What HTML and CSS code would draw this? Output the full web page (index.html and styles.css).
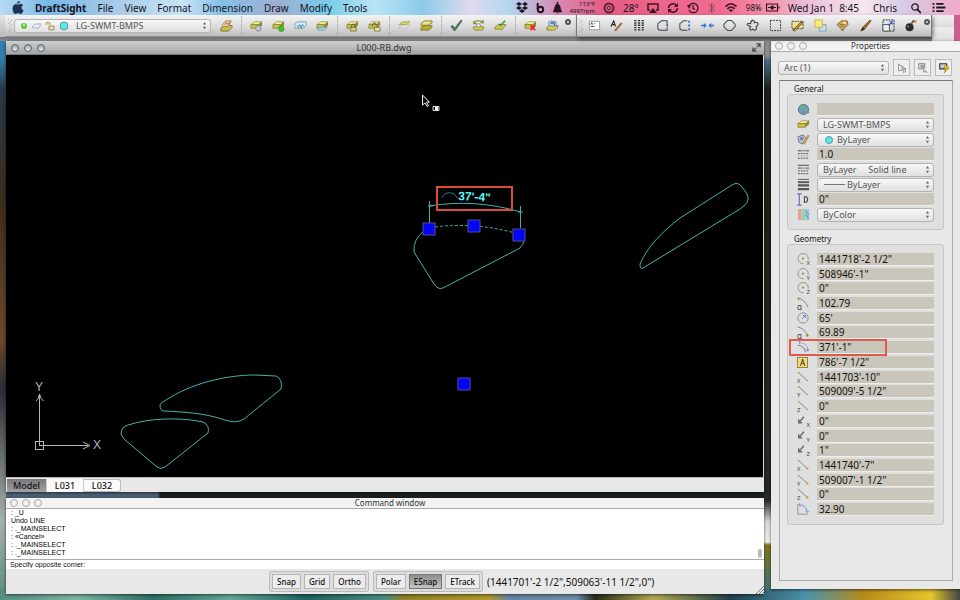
FILE: index.html
```html
<!DOCTYPE html>
<html lang="en">
<head>
<meta charset="utf-8">
<title>DraftSight - L000-RB.dwg</title>
<link rel="stylesheet" href="styles.css">
</head>
<body>
<svg class="sprite" aria-hidden="true">
  <symbol id="slab" viewBox="0 0 14 14"><path d="M1 6l4-3h8l-4 3z" fill="#f3efa0" stroke="#8b8326" stroke-width=".7"/><path d="M1 6h8v4H1z" fill="#c9c04a" stroke="#7b7426" stroke-width=".7"/><path d="M9 6l4-3v4l-4 3z" fill="#8f8834"/></symbol>
  <symbol id="slab2" viewBox="0 0 14 14"><path d="M1 9l4-2h8v2l-4 3H1z" fill="#b3ab38" stroke="#6f6924" stroke-width=".7"/><path d="M1 5l4-3h8v2L9 7H1z" fill="#d3ca52" stroke="#6f6924" stroke-width=".7"/><path d="M2 5l3.500-2H12L9 5z" fill="#f1eda0"/></symbol>
  <symbol id="manager" viewBox="0 0 14 14"><path d="M1 10l4-3h8v2l-4 4H1z" fill="#c9c04a" stroke="#665d20" stroke-width=".8"/><path d="M2 7l4-5h6L9 8H3z" fill="#ecd9b4" stroke="#9b6e40" stroke-width=".8"/><path d="M5 6l2-2 1 2 3-3" stroke="#b4472b" fill="none"/></symbol>
  <symbol id="badge-grey" viewBox="0 0 14 14"><use href="#slab"/><circle cx="9" cy="10" r="3" fill="#c9c9c9" stroke="#777" stroke-width=".8"/></symbol>
  <symbol id="badge-green" viewBox="0 0 14 14"><use href="#slab"/><circle cx="10" cy="10.500" r="3" fill="#38c923" stroke="#248516" stroke-width=".6"/></symbol>
  <symbol id="badge-frozen" viewBox="0 0 14 14"><path d="M1 5l3-2h9v4l-3 3H1z" fill="#d4ebf4" stroke="#668fa3" stroke-width=".8"/><path d="M3 7l2 2 1-3 2 4 1-4 2 2" stroke="#356f9a" fill="none" stroke-width=".9"/></symbol>
  <symbol id="badge-thaw" viewBox="0 0 14 14"><use href="#slab"/><path d="M3 9h9l-3 3H2z" fill="#a9d5ee" stroke="#5588a7" stroke-width=".7"/></symbol>
  <symbol id="badge-lock" viewBox="0 0 14 14"><use href="#slab"/><path d="M6 9V7.500a2 2 0 0 1 4 0V9" fill="none" stroke="#555"/><path d="M5 9h6v4H5z" fill="#d6cf77" stroke="#5d5727" stroke-width=".7"/></symbol>
  <symbol id="badge-unlock" viewBox="0 0 14 14"><use href="#slab"/><path d="M5 8V6.500a2 2 0 0 1 4 0" fill="none" stroke="#555"/><path d="M7 9h6v4H7z" fill="#eee4a2" stroke="#5d5727" stroke-width=".7"/></symbol>
  <symbol id="slab-fade" viewBox="0 0 14 14"><path d="M1 9l4-3h8l-4 4H1z" fill="#e0e0dc" stroke="#b4b4ac" stroke-width=".6"/><path d="M1 6l4-3h8L9 6z" fill="#ddd562" stroke="#99923a" stroke-width=".7"/></symbol>
  <symbol id="check" viewBox="0 0 14 14"><path d="M1 8l2-1 2 3 7-9 1 1-8 11z" fill="#3e8f5b" stroke="#1e4931" stroke-width=".7"/></symbol>
  <symbol id="cycle" viewBox="0 0 14 14"><path d="M1 9l3-1h7l2 1-2 3H3z" fill="#d3ca52" stroke="#6f6924" stroke-width=".7"/><path d="M2 5c1-4 8-4 10-1M12 1v3H9M2 2v3h3" fill="none" stroke="#8b8326" stroke-width="1.200"/><circle cx="7" cy="7" r="2" fill="#f1f1cd" stroke="#4986a0" stroke-width=".8"/></symbol>
  <symbol id="slab-check" viewBox="0 0 14 14"><path d="M1 9l4-3h8l-4 5H1z" fill="#d3ca52" stroke="#6f6924" stroke-width=".7"/><path d="M5 5l2 2 5-5" fill="none" stroke="#309b28" stroke-width="1.500"/></symbol>
  <symbol id="slab-x" viewBox="0 0 14 14"><use href="#slab"/><path d="M7 7l5 5M12 7l-5 5" stroke="#e52b1d" stroke-width="2"/></symbol>
  <symbol id="slab-back" viewBox="0 0 14 14"><path d="M1 9l3-2h9v2l-4 3H1z" fill="#d3ca52" stroke="#6f6924" stroke-width=".7"/><path d="M3 7V3l3-1 5 1v5z" fill="#c5d9ee" stroke="#4f7193" stroke-width=".7"/><path d="M5 5c2-2 5-1 4 2" fill="none" stroke="#1454ae" stroke-width="1.300"/></symbol>

  <symbol id="note" viewBox="0 0 14 14"><path d="M1.500 2.500h11v9h-11z" fill="#fff" stroke="#999"/><path d="M3 6l1-2 1 2M7 5h1M3 8h4" stroke="#333" fill="none"/></symbol>
  <symbol id="text-edit" viewBox="0 0 14 14"><path d="M1 8l3-6 2 6M2 6h3" fill="none" stroke="#222" stroke-width="1.200"/><path d="M5 12l7-8 1 1-7 8z" fill="#b97b3a" stroke="#664018" stroke-width=".6"/></symbol>
  <symbol id="pattern" viewBox="0 0 14 14"><path d="M2.500 1v12M6.500 1v12M10.500 1v12" stroke="#333" stroke-width="2.400" stroke-dasharray="1.500 1"/></symbol>
  <symbol id="poly-open" viewBox="0 0 14 14"><path d="M12 5V2H6L2 5v5q0 2 3 2h7V9" fill="none" stroke="#444" stroke-width="1.100"/><path d="M11 5h2v3h-2z" fill="#376bd4"/></symbol>
  <symbol id="poly-dots" viewBox="0 0 14 14"><path d="M10 2H6L2 5v5q0 2 3 2h5" fill="none" stroke="#444" stroke-width="1.100"/><path d="M11 2h2v2h-2zM11 6h2v2h-2zM11 10h2v2h-2z" fill="#376bd4"/></symbol>
  <symbol id="join" viewBox="0 0 14 14"><path d="M0 7h5M14 7H9" stroke="#267ce1" stroke-width="1.500"/><path d="M3 4l3 3-3 3zM11 4L8 7l3 3z" fill="#267ce1"/></symbol>
  <symbol id="polygon" viewBox="0 0 14 14"><path d="M5 1.500h4l4 4v3l-4 4H5l-4-4v-3z" fill="none" stroke="#444" stroke-width="1.100"/></symbol>
  <symbol id="cloud" viewBox="0 0 14 14"><path d="M5 5c0-5 5-4 4-1 5-1 5 2 2 4 1 4-2 5-4 3-2 2-4 0-2-3-5-1-5-4 0-3z" fill="none" stroke="#444" stroke-width="1.200"/></symbol>
  <symbol id="marquee" viewBox="0 0 14 14"><path d="M1.500 1.500h11v11h-11z" fill="none" stroke="#333" stroke-dasharray="2 1"/></symbol>
  <symbol id="hatch-edit" viewBox="0 0 14 14"><path d="M1 2.500h12v8H1z" fill="#eee28b" stroke="#333" stroke-dasharray="2 1"/><path d="M2 12l9-9 2 1-9 9z" fill="#be953d" stroke="#423216" stroke-width=".7"/></symbol>
  <symbol id="order" viewBox="0 0 14 14"><path d="M6 6h7v7H6z" fill="#c1dfed" stroke="#7195a5" stroke-width=".8"/><path d="M1 1h8v8H1z" fill="#f7ea78" stroke="#b8ab4b" stroke-width=".8"/></symbol>
  <symbol id="palette" viewBox="0 0 14 14"><path d="M1 6l5-4h6l1 4-4 4-2 3-2-3z" fill="#d9a84c" stroke="#704b24" stroke-width=".8"/><path d="M4 6h6M5 8h4" stroke="#5f7884"/><circle cx="9" cy="4" r="1.700" fill="#efdc92"/></symbol>
  <symbol id="brush" viewBox="0 0 14 14"><path d="M2 13l2-4 8-8 1 1-7 9z" fill="#a96928" stroke="#51300f" stroke-width=".7"/><path d="M2 13l2-4 2 2z" fill="#252525"/></symbol>
  <symbol id="scale" viewBox="0 0 14 14"><path d="M1 1h12v12H1z" fill="none" stroke="#222" stroke-dasharray="2 1"/><path d="M1 6h7v7H1z" fill="#eee" stroke="#555"/><path d="M7 7l4-4M8 3h3v3" fill="none" stroke="#3156dd" stroke-width="1.200"/></symbol>
  <symbol id="bomb" viewBox="0 0 14 14"><circle cx="6" cy="9" r="4.300" fill="#292929"/><path d="M8 5l2-3 2 1" fill="none" stroke="#333" stroke-width="1.500"/><circle cx="12" cy="2.500" r="1.500" fill="#ed812d"/><circle cx="4.500" cy="8" r="1" fill="#999"/></symbol>

  <symbol id="center" viewBox="0 0 14 14"><path d="M8 12.500A6 6 0 1 1 13 8" fill="none" stroke="#888"/><circle cx="7" cy="6.500" r="1.300" fill="#9a8d31"/></symbol>
  <symbol id="arc-start" viewBox="0 0 14 14"><path d="M1 1q8 2 12 11" fill="none" stroke="#777"/><circle cx="2" cy="2" r="1.200" fill="#918534"/></symbol>
  <symbol id="arc-end" viewBox="0 0 14 14"><path d="M1 1q8 2 12 11" fill="none" stroke="#777"/><circle cx="12" cy="11" r="1.400" fill="#918534"/></symbol>
  <symbol id="radius" viewBox="0 0 14 14"><circle cx="7" cy="7" r="6" fill="none" stroke="#888"/><path d="M6 8l4-4M7 4h3v3" fill="none" stroke="#5175dd"/></symbol>
  <symbol id="arc-length" viewBox="0 0 14 14"><path d="M1 5q7 0 9 8" fill="none" stroke="#667"/><path d="M2 2q10 0 11 9M3 0v4M11 11h3M12 9v4" fill="none" stroke="#6688e3" stroke-dasharray="3 1"/></symbol>
  <symbol id="line-start" viewBox="0 0 14 14"><path d="M2 2l11 10" stroke="#777"/><circle cx="2" cy="2" r="1.200" fill="#c7b85a"/></symbol>
  <symbol id="line-end" viewBox="0 0 14 14"><path d="M1 1l11 10" stroke="#777"/><circle cx="12" cy="11" r="1.400" fill="#c7ab45"/></symbol>
  <symbol id="normal" viewBox="0 0 14 14"><path d="M8 2L3 8M2 5v4h4" fill="none" stroke="#666" stroke-width="1.600"/></symbol>
  <symbol id="angle" viewBox="0 0 14 14"><path d="M1 1v12h12" fill="none" stroke="#888"/><path d="M2 2q9 0 10 9M4 0L2 2l2 2M10 9l2 2 2-2" fill="none" stroke="#6688e3"/></symbol>
  <symbol id="steppers" viewBox="0 0 6 10"><path d="M3 0l2 3H1zM3 9l2-3H1z" fill="#666"/></symbol>
</svg>

<nav class="menubar" aria-label="Application menu">
  <button class="apple" aria-label="Apple menu"><svg viewBox="0 0 12 14"><path d="M8 0c0 2-1 3-3 3 0-2 1-3 3-3zM6 4c1 0 2-1 3-1s2 1 2.500 1.500C9 6 9.500 9 12 10c-.5 2-2 4-3 4S7 13 6 13s-2 1-3 1C1 14-.5 9 .5 6 1.500 3 4 3.500 6 4z" fill="#1d3550"/></svg></button>
  <button class="app-name">DraftSight</button><button>File</button><button>View</button><button>Format</button><button>Dimension</button><button>Draw</button><button>Modify</button><button>Tools</button>
  <div class="status">
    <svg class="s12" viewBox="0 0 12 12"><path d="M3 0l3 2-3 2-3-2zM9 0l3 2-3 2-3-2zM3 4l3 2-3 2-3-2zM9 4l3 2-3 2-3-2zM6 7l3 2-3 2-3-2z" fill="#1c1428"/></svg>
    <svg class="s8" viewBox="0 0 8 12"><path d="M1.200 1v6" stroke="#2b1020" stroke-width="2"/><circle cx="4" cy="7.500" r="2.700" fill="none" stroke="#2b1020" stroke-width="2"/></svg>
    <svg class="s8" viewBox="0 0 9 12"><path d="M0 10c2-2 1-7 4-8V0h1v2c3 1 2 6 4 8zM3 11h3" fill="#2b1020" stroke="#2b1020" stroke-width=".5"/></svg>
    <span class="fan">113°F<br>4997rpm</span>
    <svg class="s12" viewBox="0 0 12 12"><circle cx="6" cy="6" r="4.500" fill="none" stroke="#5c2236" stroke-width="2"/><circle cx="6" cy="6" r="1.800" fill="none" stroke="#5c2236"/></svg>
    <span>28°</span>
    <svg class="s12" viewBox="0 0 12 12"><path d="M3 8H1V2h10v6H9" fill="none" stroke="#411525" stroke-width="1.500"/><path d="M6 6l4 5H2z" fill="#411525"/></svg>
    <svg class="s12" viewBox="0 0 12 12"><path d="M1.500 6a4.500 4.500 0 0 1 8-2.500M10.500 6a4.500 4.500 0 0 1-8 2.500" fill="none" stroke="#411525" stroke-width="1.500"/><path d="M11 1v4H7zM1 11V7h4z" fill="#411525"/></svg>
    <svg class="s12" viewBox="0 0 12 12"><path d="M2 4a4.700 4.700 0 1 1 0 4M6 3v3.500l2 1" fill="none" stroke="#411525" stroke-width="1.300"/><path d="M0 3l4 0-2 4z" fill="#411525"/></svg>
    <svg class="s8" viewBox="0 0 8 12"><path d="M1 3l6 5-3 3V1l3 3-6 5" fill="none" stroke="#8d4760"/></svg>
    <svg class="s14" viewBox="0 0 14 12"><path d="M1 5q6-6 12 0M3 7.500q4-4 8 0" fill="none" stroke="#411525" stroke-width="1.700"/><path d="M7 11L4.500 9q2.500-2 5 0z" fill="#411525"/></svg>
    <span class="battery">98%<svg class="s14" viewBox="0 0 14 10"><path d="M.5 1.500h11v7H.5zM13 4v2" fill="none" stroke="#35101d" stroke-width="1.200"/><path d="M2 5h2l3-2v4L4 5M7 5h3" fill="#35101d" stroke="#35101d"/></svg></span>
    <span class="clock">Wed Jan 1&nbsp; 8:45</span>
    <span class="user">Chris</span>
    <svg class="s10" viewBox="0 0 10 12"><circle cx="4" cy="5" r="3.200" fill="none" stroke="#231c2b" stroke-width="1.300"/><path d="M6.500 7.500L10 11" stroke="#231c2b" stroke-width="1.800"/></svg>
    <svg class="s14 list" viewBox="0 0 14 12"><path d="M0 2h2M0 6h2M0 10h2M4 2h8M4 6h10M4 10h8" stroke="#17151d" stroke-width="2"/></svg>
  </div>
</nav>

<div class="toolbars">
  <div class="toolbar layers" role="toolbar" aria-label="Layers">
    <i class="grip"></i>
    <div class="pick layer-pick">
      <svg class="layer-marks" viewBox="0 0 52 12"><circle cx="5" cy="6" r="3" fill="#65c044"/><circle cx="5" cy="5" r="1.200" fill="#b7ef9a"/><path d="M13 7l3-3h6l-2 4h-6z" fill="#e4edf7" stroke="#93a8c0" stroke-width=".8"/><path d="M27 5V3q2-2 4 0v2M30 6h5v4h-5z" fill="#eee0a4" stroke="#8a8055" stroke-width=".8"/><circle cx="45" cy="6" r="4" fill="#62e4e4" stroke="#428f93" stroke-width=".8"/></svg>
      <select aria-label="Active layer"><option>LG-SWMT-BMPS</option></select><svg class="step"><use href="#steppers"/></svg>
    </div>
    <button class="tool" aria-label="Layers manager"><svg><use href="#manager"/></svg></button><i class="sep"></i>
    <button class="tool" aria-label="Hide layer"><svg><use href="#badge-grey"/></svg></button>
    <button class="tool" aria-label="Show layer"><svg><use href="#badge-green"/></svg></button>
    <button class="tool" aria-label="Freeze layer"><svg><use href="#badge-frozen"/></svg></button>
    <button class="tool" aria-label="Thaw layer"><svg><use href="#badge-thaw"/></svg></button><i class="sep"></i>
    <button class="tool" aria-label="Lock layer"><svg><use href="#badge-lock"/></svg></button>
    <button class="tool" aria-label="Unlock layer"><svg><use href="#badge-unlock"/></svg></button><i class="sep"></i>
    <button class="tool" aria-label="Isolate layer"><svg><use href="#slab-fade"/></svg></button>
    <button class="tool" aria-label="Show all layers"><svg><use href="#slab2"/></svg></button><i class="sep"></i>
    <button class="tool" aria-label="Activate layer"><svg><use href="#check"/></svg></button>
    <button class="tool" aria-label="Change entity layer"><svg><use href="#cycle"/></svg></button>
    <button class="tool" aria-label="To active layer"><svg><use href="#slab-check"/></svg></button><i class="sep"></i>
    <button class="tool" aria-label="Delete layer"><svg><use href="#slab-x"/></svg></button>
    <button class="tool" aria-label="Restore layer state"><svg><use href="#slab-back"/></svg></button>
    <button class="shut" aria-label="Close layers toolbar"></button>
  </div>
  <div class="toolbar modify" role="toolbar" aria-label="Modify">
    <i class="grip"></i>
    <button class="tool" aria-label="Edit annotation"><svg><use href="#note"/></svg></button>
    <button class="tool" aria-label="Edit text"><svg><use href="#text-edit"/></svg></button>
    <button class="tool" aria-label="Pattern"><svg><use href="#pattern"/></svg></button>
    <button class="tool" aria-label="Split at point"><svg><use href="#poly-open"/></svg></button>
    <button class="tool" aria-label="Split"><svg><use href="#poly-dots"/></svg></button>
    <button class="tool" aria-label="Weld"><svg><use href="#join"/></svg></button>
    <button class="tool" aria-label="Edit polyline"><svg><use href="#polygon"/></svg></button>
    <button class="tool" aria-label="Edit spline"><svg><use href="#cloud"/></svg></button>
    <button class="tool" aria-label="Boundary"><svg><use href="#marquee"/></svg></button>
    <button class="tool" aria-label="Edit hatch"><svg><use href="#hatch-edit"/></svg></button>
    <button class="tool" aria-label="Display order"><svg><use href="#order"/></svg></button>
    <button class="tool" aria-label="Properties"><svg><use href="#palette"/></svg></button>
    <button class="tool" aria-label="Property painter"><svg><use href="#brush"/></svg></button>
    <button class="tool" aria-label="Scale"><svg><use href="#scale"/></svg></button>
    <button class="tool" aria-label="Explode"><svg><use href="#bomb"/></svg></button>
    <button class="shut" aria-label="Close modify toolbar"></button>
  </div>
  <div class="behind"></div>
</div>

<main class="workspace">
  <div class="left">
    <section class="window document">
      <header class="titlebar dark"><span class="lights"><button aria-label="Close"></button><button aria-label="Minimize"></button><button aria-label="Zoom"></button></span><h1>L000-RB.dwg</h1><svg class="expand" viewBox="0 0 10 10"><path d="M5 1h4v4M9 1L5.500 4.500M1 5v4h4M1 9l3.500-3.500" fill="none" stroke="#444" stroke-width="1.300"/></svg></header>
      <div class="canvas">
        <svg viewBox="6 55 757 422" preserveAspectRatio="xMinYMin slice">
          <g class="outline">
            <path d="M643 268Q640 270 640 264C648 246 661 233 680 218L732 185Q738 181 742 187L747 194Q750 200 745 205L740 209Z"/>
            <path d="M160 405Q161 402 166 400C190 384 225 375 255 375L276 376Q283 379 281 389L244 419Q236 424 225 420C205 413 184 412 164 411Q160 411 160 405Z"/>
            <path d="M121 434Q121 427 128 425C150 418 180 417 203 422Q210 425 208 433L165 467Q161 470 157 467L124 439Z"/>
            <path d="M424 231Q413 239 414 252L434 284Q438 290 443 288L520 248Q524 245 524 239"/>
            <path d="M429.500 223V201M520.500 228V206M429 206C460 201 490 203 521 212M428 206h5M518 212h5"/>
          </g>
          <path class="selected" d="M435 227Q475 222 515 233"/>
          <path d="M442 198a8 8 0 0 1 15 0" fill="none" stroke="#2a8486"/>
          <text class="dim" x="458" y="200" transform="rotate(3 458 200)">37'-4"</text>
          <rect class="mark" x="437" y="187" width="75" height="23"/>
          <g class="grip-point"><rect x="423" y="223" width="12" height="12"/><rect x="468" y="220" width="12" height="12"/><rect x="513" y="229" width="12" height="12"/><rect x="458" y="378" width="12" height="12"/></g>
          <g class="axes"><path d="M39.500 445V395M36 401q3-2 3.500-7 1 5 4 7M39 445.500h49M83 442l7 3.500-7 3.500"/><rect x="35.500" y="441.500" width="8" height="8"/></g>
          <text class="axis" x="35" y="391">Y</text><text class="axis" x="93" y="449">X</text>
          <path d="M422.500 95v10l2.500-2 2 3.500 1.500-.8-2-3.500h3z" fill="#111" stroke="#eee"/>
          <path d="M433 106.500h6v4h-6z" fill="none" stroke="#ddd"/><path d="M435 107h3v3h-3z" fill="#fff"/>
        </svg>
      </div>
      <footer class="tabs"><button class="on">Model</button><button>L031</button><button>L032</button></footer>
    </section>

    <section class="window command">
      <header class="titlebar"><span class="lights"><button aria-label="Close"></button><button aria-label="Minimize"></button><button aria-label="Zoom"></button></span><h2>Command window</h2></header>
      <div class="log"><p>: _U</p><p>Undo LINE</p><p>: ._MAINSELECT</p><p>: «Cancel»</p><p>: ._MAINSELECT</p><p>: ._MAINSELECT</p><i class="thumb"></i></div>
      <input class="prompt" aria-label="Command" value="Specify opposite corner:">
      <footer class="statusbar">
        <div class="toggles"><button>Snap</button><button>Grid</button><button>Ortho</button></div>
        <div class="toggles"><button>Polar</button><button class="on">ESnap</button><button>ETrack</button></div>
        <output>(1441701'-2 1/2",509063'-11 1/2",0")</output>
        <svg class="resize" viewBox="0 0 8 8"><path d="M0 8l8-8M3 8l5-5M6 8l2-2" stroke="#777"/></svg>
      </footer>
    </section>
  </div>

  <aside class="window properties">
    <header class="titlebar"><span class="lights"><button aria-label="Close"></button><button aria-label="Minimize"></button><button aria-label="Zoom"></button></span><h2>Properties</h2></header>
    <div class="selection">
      <div class="pick"><select aria-label="Selected entity"><option>Arc (1)</option></select><svg class="step"><use href="#steppers"/></svg></div>
      <button aria-label="Select entities"><svg viewBox="0 0 14 14"><path d="M3 2v8h4V6L3 2zM6 4l5 4H7" fill="none" stroke="#888"/><path d="M9 8v5M11 7v5" stroke="#888"/></svg></button>
      <button aria-label="Select matching"><svg viewBox="0 0 14 14"><path d="M2 2h7v6H2z" fill="#ddd" stroke="#777"/><circle cx="6" cy="5" r="2" fill="#999"/><path d="M8 6v6l2-2 2 3" fill="#fff" stroke="#777"/></svg></button>
      <button aria-label="Smart select"><svg viewBox="0 0 14 14"><path d="M2 2h8v6H2z" fill="#ccc" stroke="#333" stroke-width="1.300"/><path d="M8 4h4l-2 3h3l-6 6 2-5H7z" fill="#eecb20" stroke="#7b6715" stroke-width=".6"/></svg></button>
    </div>
    <div class="frame">
      <h3>General</h3>
      <div class="group general">
        <div class="row"><svg class="ico" viewBox="0 0 14 14"><circle cx="7" cy="7" r="5.500" fill="#699dca" stroke="#597181"/><path d="M3 4q3-3 5 0l-3 3zM8 8l3-2v4z" fill="#73b66a"/><path d="M6 10h7" stroke="#888" stroke-width="2"/></svg><input aria-label="Hyperlink" value=""></div>
        <div class="row"><svg class="ico"><use href="#slab"/></svg><div class="pick"><select aria-label="Layer"><option>LG-SWMT-BMPS</option></select><svg class="step"><use href="#steppers"/></svg></div></div>
        <div class="row"><svg class="ico" viewBox="0 0 14 14"><path d="M1 4l6-2 3 5-4 5-4-2z" fill="#bec7d5" stroke="#68778d"/><circle cx="5" cy="6" r="2" fill="#7188b4"/><path d="M6 11l6-9 1 1-5 9z" fill="#dba852" stroke="#7f6332" stroke-width=".5"/></svg><div class="pick swatch"><i class="dot"></i><select aria-label="Line color"><option>ByLayer</option></select><svg class="step"><use href="#steppers"/></svg></div></div>
        <div class="row"><svg class="ico" viewBox="0 0 14 14"><path d="M1 3h12" stroke="#444" stroke-dasharray="4 1 2 1"/><path d="M1 6h12M1 11h12" stroke="#444" stroke-dasharray="2 1"/><path d="M1 8.500h12" stroke="#888" stroke-dasharray="1 1"/></svg><input aria-label="Line scale" value="1.0"></div>
        <div class="row"><svg class="ico" viewBox="0 0 14 14"><path d="M1 2.500h12" stroke="#444"/><path d="M1 5.500h12" stroke="#444" stroke-dasharray="4 1 2 1"/><path d="M1 8.500h12M1 11.500h12" stroke="#444" stroke-dasharray="2 1"/></svg><div class="pick"><select aria-label="Line style"><option>ByLayer &nbsp; &nbsp; Solid line</option></select><svg class="step"><use href="#steppers"/></svg></div></div>
        <div class="row"><svg class="ico" viewBox="0 0 14 14"><path d="M1 1.500h12" stroke="#555"/><path d="M1 4.500h12" stroke="#555" stroke-width="2"/><path d="M1 8h12M1 12h12" stroke="#555" stroke-width="2.500"/></svg><div class="pick weight"><i class="rule"></i><select aria-label="Line weight"><option>ByLayer</option></select><svg class="step"><use href="#steppers"/></svg></div></div>
        <div class="row"><svg class="ico" viewBox="0 0 14 14"><path d="M0 1h5M0 13h5M2.500 1v12" stroke="#6672c5" stroke-width="1.300"/><path d="M8 4v6h2q3-3 0-6z" fill="none" stroke="#444" stroke-width="1.200"/></svg><input aria-label="Thickness" value="0&quot;"></div>
        <div class="row"><svg class="ico" viewBox="0 0 14 14"><path d="M1 1h4v12H1z" fill="#e6a197"/><path d="M5 1h4v12H5z" fill="#96d4a4"/><path d="M9 1h4v12H9z" fill="#93c5e4"/><path d="M9 3l4 4M9 7l4 4" stroke="#4f80b8"/></svg><div class="pick"><select aria-label="Print style"><option>ByColor</option></select><svg class="step"><use href="#steppers"/></svg></div></div>
      </div>
      <h3>Geometry</h3>
      <div class="group geometry">
        <div class="row"><span class="ico"><svg><use href="#center"/></svg><b class="sub r">X</b></span><input aria-label="Center X" value="1441718'-2 1/2&quot;"></div>
        <div class="row"><span class="ico"><svg><use href="#center"/></svg><b class="sub r">Y</b></span><input aria-label="Center Y" value="508946'-1&quot;"></div>
        <div class="row"><span class="ico"><svg><use href="#center"/></svg><b class="sub r">Z</b></span><input aria-label="Center Z" value="0&quot;"></div>
        <div class="row"><span class="ico"><svg><use href="#arc-start"/></svg><b class="sub alpha">α</b></span><input aria-label="Start angle" value="102.79"></div>
        <div class="row"><span class="ico"><svg><use href="#radius"/></svg></span><input aria-label="Radius" value="65'"></div>
        <div class="row"><span class="ico"><svg><use href="#arc-end"/></svg><b class="sub alpha">α</b></span><input aria-label="End angle" value="69.89"></div>
        <div class="row flagged"><span class="ico"><svg><use href="#arc-length"/></svg></span><input aria-label="Arc length" value="371'-1&quot;"></div>
        <div class="row"><span class="ico area">A</span><input aria-label="Area" value="786'-7 1/2&quot;"></div>
        <div class="row"><span class="ico"><svg><use href="#line-start"/></svg><b class="sub">X</b></span><input aria-label="Start X" value="1441703'-10&quot;"></div>
        <div class="row"><span class="ico"><svg><use href="#line-start"/></svg><b class="sub">Y</b></span><input aria-label="Start Y" value="509009'-5 1/2&quot;"></div>
        <div class="row"><span class="ico"><svg><use href="#line-start"/></svg><b class="sub">Z</b></span><input aria-label="Start Z" value="0&quot;"></div>
        <div class="row"><span class="ico"><svg><use href="#normal"/></svg><b class="sub r">X</b></span><input aria-label="Normal X" value="0&quot;"></div>
        <div class="row"><span class="ico"><svg><use href="#normal"/></svg><b class="sub r">Y</b></span><input aria-label="Normal Y" value="0&quot;"></div>
        <div class="row"><span class="ico"><svg><use href="#normal"/></svg><b class="sub r">Z</b></span><input aria-label="Normal Z" value="1&quot;"></div>
        <div class="row"><span class="ico"><svg><use href="#line-end"/></svg><b class="sub">X</b></span><input aria-label="End X" value="1441740'-7&quot;"></div>
        <div class="row"><span class="ico"><svg><use href="#line-end"/></svg><b class="sub">Y</b></span><input aria-label="End Y" value="509007'-1 1/2&quot;"></div>
        <div class="row"><span class="ico"><svg><use href="#line-end"/></svg><b class="sub">Z</b></span><input aria-label="End Z" value="0&quot;"></div>
        <div class="row"><span class="ico"><svg><use href="#angle"/></svg></span><input aria-label="Total angle" value="32.90"></div>
      </div>
    </div>
  </aside>
</main>
</body>
</html>
```

FILE: styles.css
```css
* { box-sizing: border-box; }
html { height: 100%; }
body {
  margin: 0;
  min-height: 100%;
  display: flex;
  flex-direction: column;
  font-family: "Noto Sans", "Liberation Sans", sans-serif;
  font-size: 10px;
  color: #111;
  background:
    linear-gradient(90deg, #568c82 0%, #7eb5a5 8%, #2f6f66 16%, #64a698 24%, #20635f 32%, #4c8d85 40%, #8d842a 42%, #b09b2c 51%, #6785a4 53%, #708cab 60%, #272c1c 62%, #b5aa55 68%, #23414b 76%, #4b93aa 84%, #b88a1a 90%, #e4c52e 97%, #444 100%) bottom / 100% 11px no-repeat,
    linear-gradient(180deg, #3483ba 0, #337cab 60px, #27394a 90px, #3d2d1e 200px, #6d482c 340px, #292d35 390px, #777d7c 470px, #a6b2aa 520px, #5c8b78 600px) left / 6px 100% no-repeat,
    linear-gradient(90deg, #4d6279 158px, #1d2220 160px) 0 480px / 764px 30px no-repeat,
    linear-gradient(180deg, #8f8f8f 0, #8f8f8f 56px, #4d6d8a 60px, #182018 90px, #201f14 200px, #252b22 500px, #dedede 522px, #eee 542px, #7f761f 545px, #3b7282 600px);
}
button, input, select { font: inherit; color: inherit; margin: 0; padding: 0; border: 0; border-radius: 0; background: none; }
select { appearance: none; }
h1, h2, h3, p { margin: 0; font-weight: 400; }
svg { display: block; flex: none; }
.sprite { display: none; }

.menubar {
  height: 15px;
  display: flex;
  align-items: center;
  gap: 11px;
  padding-left: 12px;
  white-space: nowrap;
  line-height: 14px;
  color: #14141c;
  background: linear-gradient(90deg, #b8dbf2 0, #79b9e7 5%, #a8c9e8 12%, #c8e4f5 19%, #86c1e8 23%, #a0aed0 29%, #79cbea 34%, #b9e5f4 39%, #8bcce9 44%, #e0d9ef 49%, #b1d8ef 53%, #d58bb7 58%, #e65d83 63%, #f16b91 75%, #f691ac 80%, #e9bfd8 84%, #f7e5ee 90%, #d8cbe6 94%, #f0a9c7 100%);
}
.apple svg { width: 12px; height: 13px; }
.app-name { font-weight: 700; }
.status { margin-left: auto; display: flex; align-items: center; gap: 8px; padding-right: 14px; }
.s8 { width: 9px; height: 12px; }
.s10 { width: 10px; height: 12px; }
.s12 { width: 12px; height: 12px; }
.s14 { width: 14px; height: 11px; }
.fan { font-size: 6px; line-height: 7px; text-align: right; }
.battery { display: flex; align-items: center; gap: 4px; font-size: 8px; }
.user { padding: 0 6px; }
.list { margin-left: 3px; }

.toolbars { display: flex; height: 26px; align-items: flex-start; padding-left: 5px; background: linear-gradient(180deg, #e4e4e4 0, #b9b9b9 22px, #6e7276 22px, #8b8b8b 26px); }
.toolbar { display: flex; align-items: center; height: 22px; background: linear-gradient(180deg, #f4f4f4, #d9d9d9 60%, #bcbcbc); border-bottom: 1px solid #8f8f8f; position: relative; }
.layers { flex: 0 0 572px; padding-left: 3px; border-right: 1px solid #888; }
.modify { flex: 0 0 355px; padding-left: 2px; border-right: 1px solid #777; box-shadow: 1px 2px 4px rgba(0, 0, 0, .5); }
.behind { flex: 1; height: 26px; background: linear-gradient(90deg, transparent 22px, #c95f90 22px), linear-gradient(180deg, #efefef 0, #ddd 12px, #eee 13px, #ddd 26px); }
.grip { width: 4px; height: 14px; background: repeating-linear-gradient(135deg, #bdbdbd 0 1px, transparent 1px 3px); }
.tool { flex: 0 0 22px; display: flex; justify-content: center; height: 18px; align-items: center; }
.modify .tool { flex: 1; }
.tool svg { width: 13px; height: 13px; }
.sep { width: 8px; height: 19px; background: repeating-linear-gradient(180deg, #999 0 1px, transparent 1px 2px) center / 1px 100% no-repeat; }
.shut { width: 6px; height: 6px; margin: 4px 1px 0 2px; align-self: flex-start; border: 2px solid #555; border-radius: 50%; background: #ddd; }
.pick { position: relative; display: flex; align-items: center; min-width: 0; border: 1px solid #b4b4b4; border-radius: 3px; background: linear-gradient(180deg, #f8f8f8, #e0e0e0); color: #555; font-size: 9px; }
.pick select { flex: 1; min-width: 0; height: 100%; padding: 0 14px 0 5px; line-height: 11px; }
.step { position: absolute; right: 3px; top: 50%; margin-top: -4px; width: 5px; height: 8px; }
.layer-pick { flex: 0 0 197px; height: 14px; margin: 0 4px 0 2px; padding-left: 4px; }
.layer-marks { width: 52px; height: 12px; }

.workspace { flex: 1; display: grid; grid-template-columns: minmax(0, 1fr) 189px; gap: 7px; padding-left: 6px; }
.left { display: flex; flex-direction: column; gap: 6px; padding-bottom: 6px; min-width: 0; }
.window { background: #e8e8e8; box-shadow: 0 1px 3px rgba(0, 0, 0, .6); min-width: 0; }
.titlebar { display: grid; grid-template-columns: 56px 1fr 50px; align-items: center; height: 11px; padding-left: 4px; background: #f3f3f3; border-bottom: 1px solid #aaa; border-radius: 3px 3px 0 0; font-size: 8px; line-height: 10px; text-align: center; color: #333; }
.titlebar h1, .titlebar h2 { font-size: inherit; }
.lights { display: flex; gap: 4px; }
.lights button { width: 8px; height: 8px; border: 1px solid #a9a9a9; border-radius: 50%; background: #f1f1f1; }
.dark { grid-template-columns: 50px 1fr 56px; height: 14px; font-size: 9px; background: linear-gradient(180deg, #cfcfcf, #a4a4a4); border-color: #777; }
.dark .lights { gap: 5px; padding-left: 1px; }
.dark .lights button { border-color: #5f6770; background: radial-gradient(circle at 50% 80%, #e2e7ec, #8c97a2); }
.expand { width: 9px; height: 9px; justify-self: end; margin-right: 3px; }
.document { flex: 1; display: flex; flex-direction: column; }
.canvas { flex: 1; display: flex; min-height: 0; background: #000; border-right: 1px solid #ddd; overflow: hidden; }
.canvas svg { width: 100%; height: auto; }
.outline path { fill: none; stroke: #46b0ae; stroke-width: 1; }
.selected { fill: none; stroke: #46b0ae; stroke-dasharray: 3 2; }
.dim { fill: #5df5f5; font: 700 12px "Liberation Sans", sans-serif; }
.mark { fill: none; stroke: #d94b3b; stroke-width: 2; }
.grip-point rect { fill: #0505f5; stroke: #4e5195; }
.axes path, .axes rect { fill: none; stroke: #b5b5b5; }
.axis { fill: #b5b5b5; font: 12px "Liberation Sans", sans-serif; }
.tabs { display: flex; height: 15px; padding: 1px; border-top: 1px solid #bbb; }
.tabs button { width: 37px; height: 13px; font-size: 9px; line-height: 12px; font-weight: 500; background: #fafafa; border-right: 1px solid #ccc; }
.tabs .on { width: 40px; background: linear-gradient(180deg, #777, #a2a2a2); }
.tabs button:last-child { border: 1px solid #bbb; border-left: 0; border-radius: 0 3px 3px 0; }

.log { position: relative; height: 51px; padding: 0 5px; overflow: hidden; background: #fff; font: 7px/8px "Liberation Sans", sans-serif; color: #000; border-bottom: 1px solid #aaa; }
.thumb { position: absolute; right: 2px; bottom: 1px; width: 4px; height: 9px; border-radius: 2px; background: #bbb; }
.prompt { display: block; width: 100%; height: 9px; padding: 0 4px; background: #fff; font: 7px/8px "Liberation Sans", sans-serif; }
.statusbar { position: relative; display: flex; align-items: center; gap: 4px; height: 25px; padding-left: 263px; }
.toggles { display: flex; gap: 3px; padding: 2px; border: 1px solid #bbb; border-radius: 2px; background: #ddd; }
.toggles button { height: 15px; padding: 0 4px; border: 1px solid #b5b5b5; background: #ececec; font-size: 8px; font-weight: 500; line-height: 12px; }
.toggles .on { background: linear-gradient(180deg, #8d8d8d, #c5c5c5); border-color: #777; }
.resize { position: absolute; right: 0; bottom: 0; width: 8px; height: 8px; }

.properties { margin-bottom: 11px; padding-bottom: 8px; display: flex; flex-direction: column; }
.selection { display: flex; align-items: center; gap: 4px; padding: 7px 8px 4px 7px; }
.selection .pick { flex: 1; height: 14px; }
.selection button { width: 17px; height: 17px; display: grid; place-items: center; border: 1px solid #bbb; background: #eee; }
.selection button svg { width: 12px; height: 12px; }
.frame { flex: 1; margin: 0 7px 0 8px; border: 1px solid #aaa; border-top-color: #777; padding: 2px 8px 0 7px; }
.frame h3 { padding-left: 7px; font-size: 8px; line-height: 11px; }
.group { border: 1px solid #c5c5c5; border-radius: 3px; background: #dfdfdf; padding: 7px 9px 7px 9px; display: grid; }
.general { grid-auto-rows: 15px; margin-bottom: 3px; }
.geometry { grid-auto-rows: 1fr; height: 281px; }
.row { position: relative; display: grid; grid-template-columns: 14px minmax(0, 1fr); gap: 6px; align-items: center; min-height: 0; }
.row input { width: 100%; height: 13px; padding: 0 2px; line-height: 12px; background: #cbc6bb; border-bottom: 1px solid #eee; }
.row .pick { height: 14px; }
.ico { position: relative; display: block; width: 13px; height: 13px; }
.ico svg { width: 12px; height: 12px; }
.sub { position: absolute; left: 0; bottom: 0; font-size: 6px; line-height: 6px; font-weight: 400; color: #444; }
.alpha { font-size: 8px; }
.r { left: auto; right: 0; }
.area { width: 11px; height: 11px; border: 1px solid #99873b; background: #f1dc7b; font-size: 8px; line-height: 9px; text-align: center; }
.dot { width: 8px; height: 8px; margin-left: 7px; border-radius: 50%; border: 1px solid #569b9d; background: #62e4e4; }
.swatch select { padding-left: 4px; }
.rule { width: 21px; height: 1px; margin-left: 6px; background: #777; }
.weight select { padding-left: 2px; }
.flagged::after { content: ""; position: absolute; left: -8px; right: 47px; top: -1px; bottom: -1px; border: 2px solid #dc5b4b; }
```
